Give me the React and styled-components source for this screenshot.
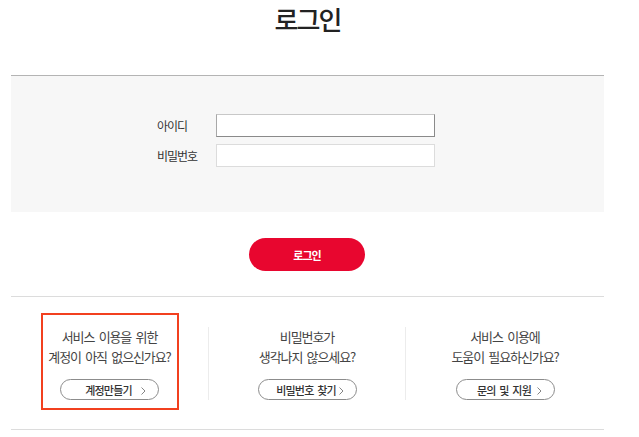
import React from "react";
import styled, { createGlobalStyle } from "styled-components";

const Global = createGlobalStyle`
  html, body { margin: 0; padding: 0; background: #fff; }
  body { font-family: "Noto Sans CJK KR", "Noto Sans", sans-serif; color: #333; }
  * { box-sizing: border-box; }
`;

const Page = styled.div`
  width: 593px;
  margin-left: 11px;
`;

const Title = styled.h1`
  margin: 0 0 37px;
  height: 38px;
  line-height: 38px;
  text-align: center;
  font-size: 26px;
  font-weight: 500;
  letter-spacing: -2px;
  color: #222;
`;

const Panel = styled.div`
  border-top: 1px solid #b4b4b4;
  background: #f7f7f7;
  height: 137px;
  padding: 38px 0 0 146px;
  display: flex;
  flex-direction: column;
  gap: 7px;
`;

const Row = styled.div`
  display: flex;
  align-items: center;
`;

const Label = styled.label`
  width: 59px;
  font-size: 12px;
  letter-spacing: -1px;
  color: #333;
`;

const Input = styled.input`
  width: 219px;
  height: 23px;
  margin: 0;
  padding: 0 6px;
  background: #fff;
  border: 1px solid #dcdcdc;
  ${(p) => p.$active && `
    border-color: #c8c8c8 #8a8a8a #8a8a8a #a8a8a8;
  `}
  outline: none;
  font-size: 12px;
`;

const SubmitWrap = styled.div`
  display: flex;
  justify-content: center;
  padding: 26px 0 25px;
  border-bottom: 1px solid #dcdcdc;
`;

const Submit = styled.button`
  width: 116px;
  height: 33px;
  border: 0;
  border-radius: 17px;
  background: #e8062f;
  color: #fff;
  font-family: inherit;
  font-size: 11px;
  font-weight: 700;
  letter-spacing: -1px;
  margin-left: -1px;
  cursor: pointer;
`;

const Columns = styled.div`
  display: grid;
  grid-template-columns: 197px 197px 199px;
  padding: 30px 0 29px;
  border-bottom: 1px solid #dcdcdc;
`;

const Column = styled.div`
  position: relative;
  display: flex;
  flex-direction: column;
  align-items: center;
  height: 73px;
  border-left: ${(p) => (p.$divider ? "1px solid #ececec" : "0")};
`;

const Question = styled.p`
  margin: 0;
  font-size: 13px;
  line-height: 20px;
  letter-spacing: -1.1px;
  word-spacing: 2.5px;
  color: #444;
  text-align: center;
`;

const LinkButton = styled.button`
  position: relative;
  margin-top: 12px;
  width: 99px;
  height: 22px;
  border: 1px solid #8c8c8c;
  border-radius: 11px;
  background: #fff;
  font-family: inherit;
  font-size: 11px;
  font-weight: 500;
  letter-spacing: -0.8px;
  word-spacing: 2px;
  color: #333;
  padding: 0 2px 0 0;
  cursor: pointer;
`;

const Chevron = styled.svg`
  position: absolute;
  right: 12px;
  top: 7px;
`;

const Highlight = styled.div`
  position: absolute;
  left: 30px;
  top: -14px;
  width: 138px;
  height: 97px;
  border: 2px solid #f2401f;
  pointer-events: none;
`;

const items = [
  { lines: ["서비스 이용을 위한", "계정이 아직 없으신가요?"], btn: "계정만들기", highlight: true },
  { lines: ["비밀번호가", "생각나지 않으세요?"], btn: "비밀번호 찾기" },
  { lines: ["서비스 이용에", "도움이 필요하신가요?"], btn: "문의 및 지원" },
];

export default function App() {
  return (
    <>
      <Global />
      <Page>
        <Title>로그인</Title>
        <Panel>
          <Row>
            <Label>아이디</Label>
            <Input $active />
          </Row>
          <Row>
            <Label>비밀번호</Label>
            <Input type="password" />
          </Row>
        </Panel>
        <SubmitWrap>
          <Submit>로그인</Submit>
        </SubmitWrap>
        <Columns>
          {items.map((it, i) => (
            <Column key={i} $divider={i > 0}>
              {it.highlight && <Highlight />}
              <Question>
                {it.lines[0]}
                <br />
                {it.lines[1]}
              </Question>
              <LinkButton>
                {it.btn}
                <Chevron width="5" height="8" viewBox="0 0 5 8">
                  <polyline points="0.5,0.5 4,4 0.5,7.5" fill="none" stroke="#777" strokeWidth="0.9" />
                </Chevron>
              </LinkButton>
            </Column>
          ))}
        </Columns>
      </Page>
    </>
  );
}
